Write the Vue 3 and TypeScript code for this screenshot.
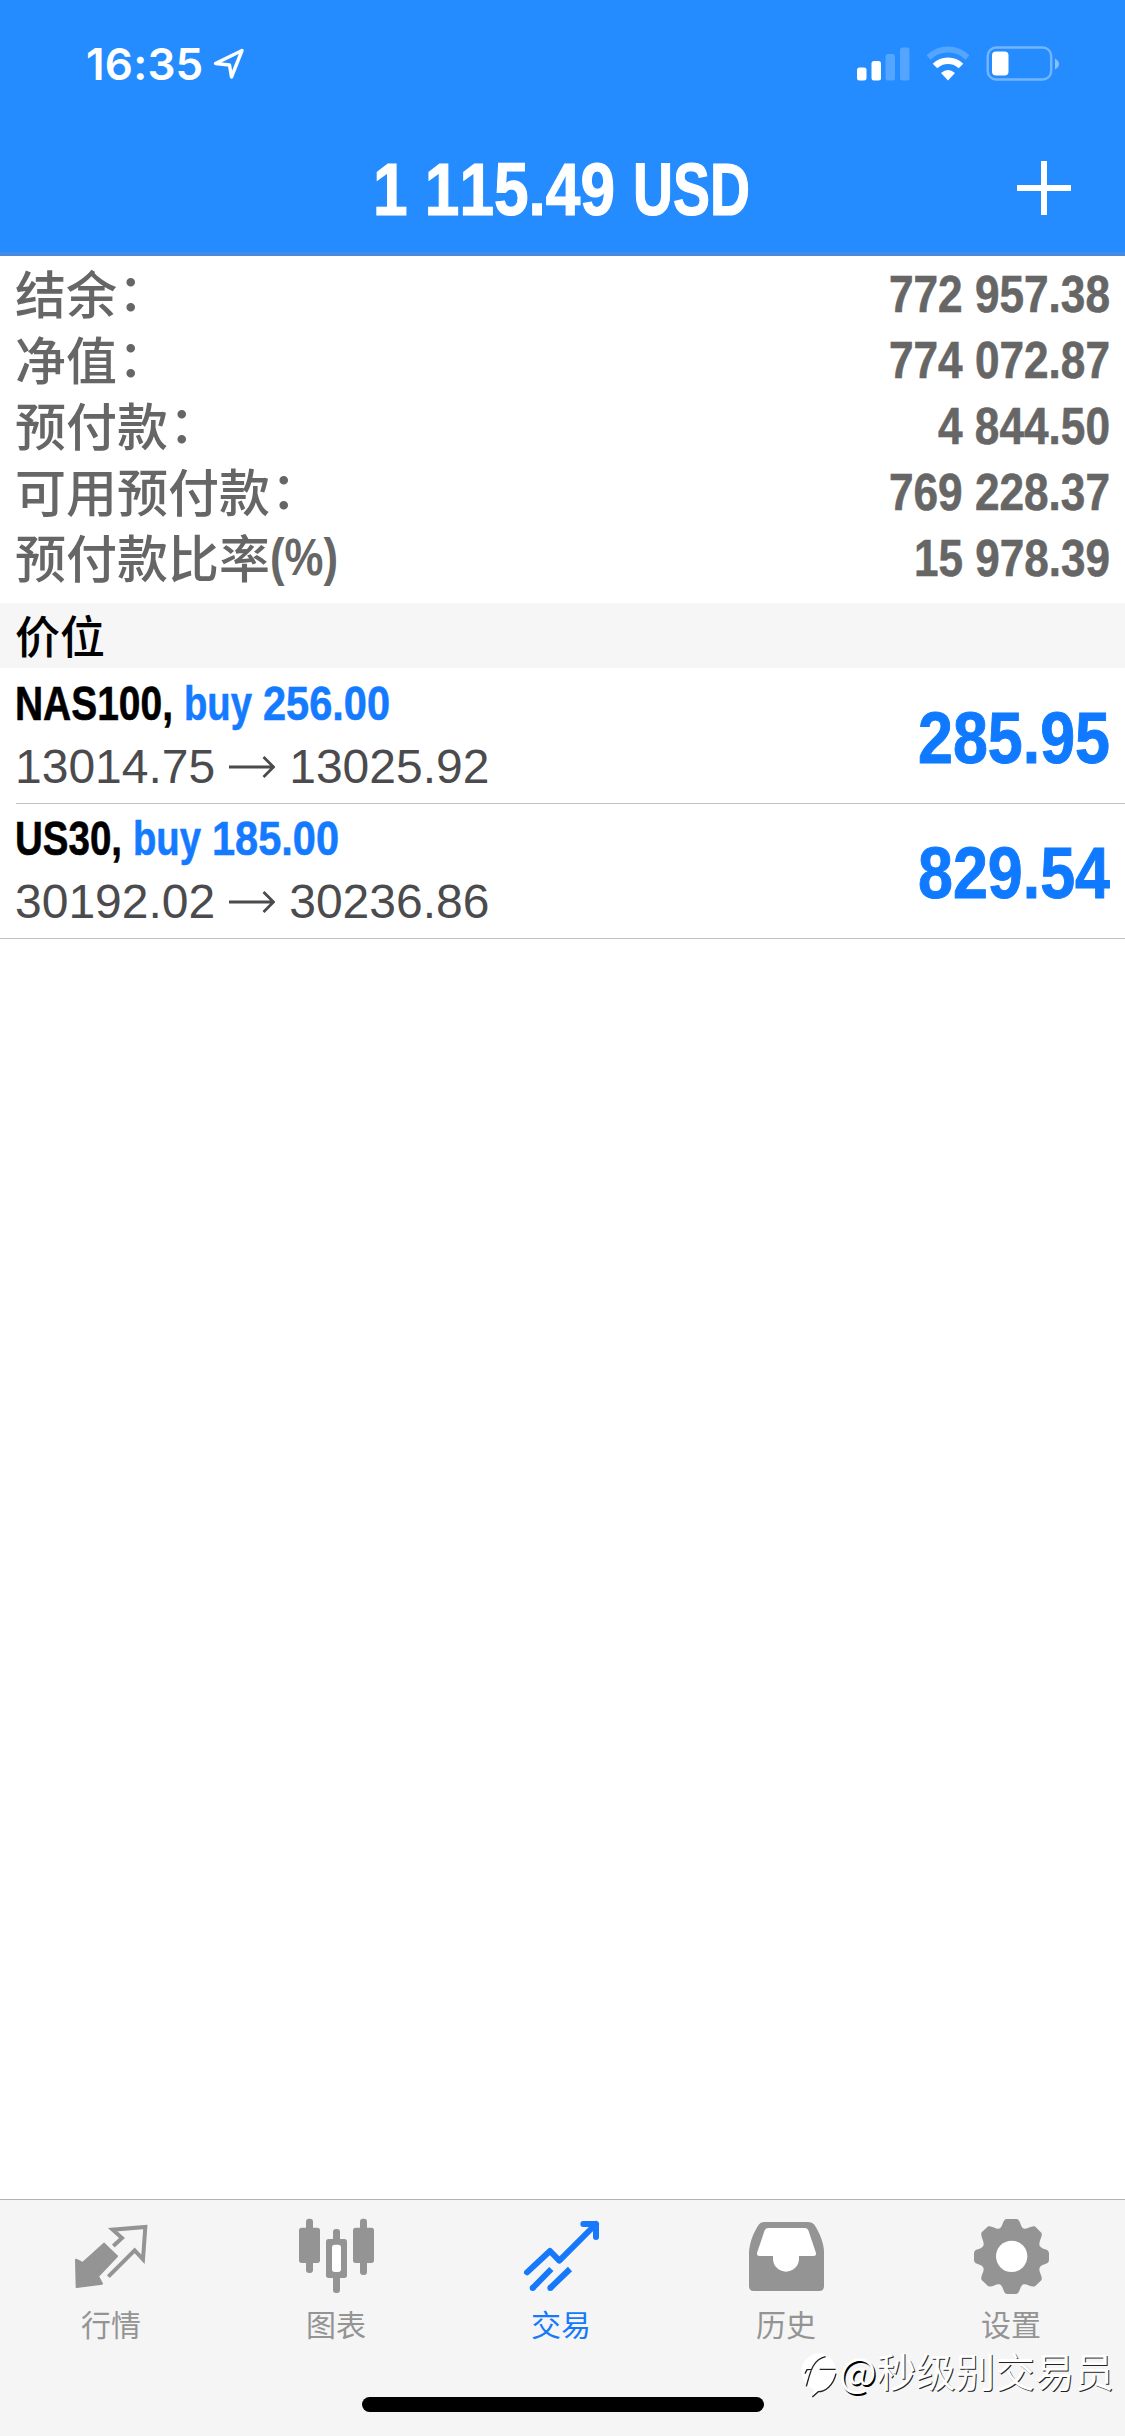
<script setup lang="ts">
import { defineComponent, h } from 'vue'

// Advance widths of the bold face, in em; anything else is a digit's width.
const ADVANCE: Record<string, number> = {
  ' ': 0.278, '.': 0.278, ',': 0.278, '(': 0.333, ')': 0.333, '%': 0.889,
  N: 0.722, A: 0.722, S: 0.667, U: 0.722, D: 0.722, b: 0.611, u: 0.611,
}

// A run of text condensed to an exact advance width.
const Fit = defineComponent({
  props: {
    text: { type: String, required: true },
    size: { type: Number, required: true },
    width: { type: Number, required: true },
    heavy: { type: Number, default: 0 },
  },
  setup(props) {
    return () => {
      const natural = [...props.text].reduce((sum, c) => sum + (ADVANCE[c] ?? 0.556), 0) * props.size
      return h(
        'svg',
        {
          width: props.width,
          height: props.size * 1.15,
          style: { display: 'block', overflow: 'visible', flex: 'none' },
        },
        [
          h(
            'text',
            {
              x: 0,
              y: props.size * 0.925,
              'font-size': props.size,
              transform: `scale(${(props.width / natural).toFixed(4)} 1)`,
              fill: 'currentColor',
              stroke: 'currentColor',
              'stroke-width': props.heavy,
              style: { whiteSpace: 'pre', fontKerning: 'none' },
            },
            props.text,
          ),
        ],
      )
    }
  },
})

interface Summary { label: string; mark: string; value: string; width: number }
interface Position {
  symbol: string; symbolWidth: number
  side: string; volume: string
  open: string; current: string; profit: string
}
interface Tab { id: string; label: string; box: string }

const summary: Summary[] = [
  { label: '结余', mark: '：', value: '772 957.38', width: 221 },
  { label: '净值', mark: '：', value: '774 072.87', width: 221 },
  { label: '预付款', mark: '：', value: '4 844.50', width: 172 },
  { label: '可用预付款', mark: '：', value: '769 228.37', width: 221 },
  { label: '预付款比率', mark: '(%)', value: '15 978.39', width: 196 },
]

const positions: Position[] = [
  { symbol: 'NAS100,', symbolWidth: 158, side: 'buy', volume: '256.00', open: '13014.75', current: '13025.92', profit: '285.95' },
  { symbol: 'US30,', symbolWidth: 107, side: 'buy', volume: '185.00', open: '30192.02', current: '30236.86', profit: '829.54' },
]

const tabs: Tab[] = [
  { id: 'quotes', label: '行情', box: '0 60 675 300' },
  { id: 'charts', label: '图表', box: '675 60 675 300' },
  { id: 'trade', label: '交易', box: '150 60 675 300' },
  { id: 'history', label: '历史', box: '-150 60 675 300' },
  { id: 'settings', label: '设置', box: '525 60 675 300' },
]
const active = 'trade'
</script>

<template>
  <div class="screen">
    <header class="top">
      <div class="status">
        <div class="clock">
          <span class="time">16:35</span>
          <svg class="loc" width="34" height="34" viewBox="0 0 34 34">
            <path d="M3.5 16.5 30 3.500 19.500 30 17.500 18Z" fill="none" stroke="#fff" stroke-width="3.4" stroke-linejoin="round" />
          </svg>
        </div>
        <svg class="radio" width="204" height="36" viewBox="857 46 204 36">
          <g fill="#fff">
            <rect x="857" y="67.500" width="9.500" height="13" rx="2.500" />
            <rect x="871.500" y="61" width="9.500" height="19.500" rx="2.500" />
            <g opacity=".22">
              <rect x="885.500" y="54" width="9.500" height="26.500" rx="2.500" />
              <rect x="900" y="47.500" width="9.500" height="33" rx="2.500" />
            </g>
          </g>
          <g fill="none" stroke="#fff">
            <path d="M928.500 57.500 A28 28 0 0 1 967.500 57.500" stroke-width="6" opacity=".22" />
            <path d="M935 66 A18.500 18.500 0 0 1 961 66" stroke-width="6.500" />
          </g>
          <path d="M941 73 Q948 67 955 73 L948 80.500Z" fill="#fff" />
          <rect x="987.700" y="47.500" width="63.500" height="32" rx="8.500" fill="none" stroke="#fff" stroke-opacity=".36" stroke-width="2.400" />
          <rect x="992" y="51.500" width="16.500" height="24" rx="4" fill="#fff" />
          <path d="M1055 58.500 Q1059 61 1059 64 Q1059 67 1055 69.500Z" fill="#fff" opacity=".45" />
        </svg>
      </div>
      <div class="nav">
        <div class="title">
          <Fit text="1 115.49" :size="74" :width="242" :heavy="1.2" />
          <Fit text="USD" :size="74" :width="117" :heavy="1.2" />
        </div>
        <svg class="plus" width="54" height="54" viewBox="0 0 54 54">
          <path d="M27 0V54M0 27H54" stroke="#fff" stroke-width="6" />
        </svg>
      </div>
    </header>

    <section class="summary">
      <div v-for="s in summary" :key="s.label" class="line">
        <div class="label">
          <span>{{ s.label }}</span>
          <span v-if="s.mark === '：'" class="colon">{{ s.mark }}</span>
          <Fit v-else class="percent" :text="s.mark" :size="51" :width="68" />
        </div>
        <Fit :text="s.value" :size="51" :width="s.width" :heavy="0.6" />
      </div>
    </section>

    <h2 class="section">价位</h2>

    <section class="positions">
      <article v-for="p in positions" :key="p.symbol" class="position">
        <div class="info">
          <div class="deal">
            <Fit class="symbol" :text="p.symbol" :size="48" :width="p.symbolWidth" :heavy="0.6" />
            <Fit :text="p.side" :size="48" :width="68" :heavy="0.6" />
            <Fit :text="p.volume" :size="48" :width="127" :heavy="0.6" />
          </div>
          <div class="prices">
            <span>{{ p.open }}</span>
            <svg width="46" height="24" viewBox="0 0 46 24">
              <path d="M0 12H44M34.500 2 44.500 12 34.500 22" fill="none" stroke="#4b4b4e" stroke-width="2.800" />
            </svg>
            <span>{{ p.current }}</span>
          </div>
        </div>
        <Fit class="profit" :text="p.profit" :size="73" :width="192" :heavy="1" />
      </article>
    </section>

    <main class="blank"></main>

    <footer class="dock">
      <nav class="tabs">
        <div v-for="t in tabs" :key="t.id" class="tab" :class="{ on: t.id === active }">
          <svg width="225" height="100" :viewBox="t.box" fill="currentColor" stroke="currentColor" stroke-width="0">
            <template v-if="t.id === 'quotes'">
              <path d="M312 191 351 229 294 289 306 311 230 321 228 239 248 249Z" stroke-width="6" stroke-linejoin="round" />
              <path d="M340 198 366 174 338 149 436 141 429 238 404 211 325 290" fill="none" stroke-width="12" />
            </template>
            <template v-else-if="t.id === 'charts'">
              <rect x="897" y="143" width="63" height="106" rx="8" />
              <rect x="918" y="116" width="21" height="163" rx="9" />
              <rect x="1059" y="143" width="63" height="106" rx="8" />
              <rect x="1080" y="116" width="21" height="169" rx="9" />
              <rect x="999" y="147" width="21" height="192" rx="9" />
              <rect x="978" y="177" width="63" height="117" rx="8" />
              <rect x="996" y="194" width="27" height="82" rx="8" fill="#fff" />
            </template>
            <template v-else-if="t.id === 'trade'">
              <g fill="none" stroke-width="18" stroke-linejoin="round">
                <path d="M381 277 450 213 478 242 588 132M550 132H588V171" stroke-linecap="round" />
                <path d="M398 324 454 267M451 324 510 267" />
              </g>
              <path d="M564 132H588V156Z" />
              <circle cx="398" cy="324" r="9" /><circle cx="451" cy="324" r="9" />
            </template>
            <template v-else-if="t.id === 'history'">
              <path d="M72 215C75 182 87 155 101 134Q106 126 118 126H250Q262 126 268 134C284 158 297 190 297 215V319Q297 333 283 333H86Q72 333 72 319Z" />
              <path d="M130 144H239Q247 144 250 151L272 216Q276 228 266 228H222V236A39 39 0 0 1 144 236V228H103Q93 228 97 216L119 151Q122 144 130 144Z" fill="#fff" />
            </template>
            <template v-else>
              <path d="M845 117H874C886 117 886 139 894 145C902 151 922 134 931 140L949 158C955 168 939 184 944 197C950 210 972 204 972 220V240C972 255 950 250 944 263C939 277 955 289 949 301L931 318C920 325 904 308 893 314C884 320 885 342 872 342H847C834 342 836 320 826 314C815 308 800 325 789 318L770 300C764 289 780 275 775 263C769 250 747 255 747 240V220C747 204 769 210 775 197C780 184 764 168 770 157L788 140C799 134 815 151 825 145C834 139 833 117 845 117Z" />
              <circle cx="860" cy="229" r="47" fill="#fff" />
            </template>
          </svg>
          <span>{{ t.label }}</span>
        </div>
      </nav>
      <div class="home"></div>
    </footer>

    <div class="mark">
      <svg width="40" height="46" viewBox="222 522 120 138">
        <path d="M279 523A54 54 0 0 1 333 577C333 615 305 636 280 638L262 654 268 632A56 56 0 0 1 279 523Z" fill="#fff" />
        <path d="M240 584 246 572 262 571M244 622C256 580 262 542 302 533M284 571H332M333 584C325 620 300 638 280 638L262 654" fill="none" stroke="#222" stroke-width="4" />
      </svg>
      <span class="at">@</span><span>秒级别交易员</span>
    </div>
  </div>
</template>

<style>
body { background: #fff; }
</style>

<style scoped>
.screen {
  position: relative;
  display: flex;
  flex-direction: column;
  width: 1125px;
  height: 2436px;
  overflow: hidden;
  background: #fff;
  font-family: "Liberation Sans", "Noto Sans CJK SC", sans-serif;
  font-weight: 700;
}
.top {
  box-sizing: border-box;
  height: 256px;
  flex: none;
  background: #248cff;
  border-bottom: 4px solid #438be4;
  color: #fff;
}
.status {
  display: flex;
  justify-content: space-between;
  height: 130px;
  padding: 0 64px 0 86px;
}
.clock {
  display: flex;
  align-items: flex-start;
  gap: 9px;
  padding-top: 37px;
}
.time {
  width: 117px;
  font: 600 44px/54px Inter, sans-serif;
  letter-spacing: 0.2px;
  white-space: nowrap;
}
.loc { margin-top: 10px; }
.radio { margin-top: 46px; }
.nav {
  display: flex;
  align-items: flex-start;
  justify-content: space-between;
  padding: 0 54px 0 373px;
}
.title { display: flex; gap: 18px; margin-top: 16.5px; }
.plus { margin-top: 31px; }
.summary {
  box-sizing: border-box;
  height: 347px;
  flex: none;
  padding: 5px 15px 0;
  color: #666;
}
.line {
  display: flex;
  align-items: center;
  justify-content: space-between;
  height: 66px;
}
.label {
  display: flex;
  height: 66px;
  margin-top: -4px;
  font: 500 51px/66px "Noto Sans CJK SC", sans-serif;
}
.colon { margin: -3px 0 0 1px; }
.percent {
  margin-top: 5px;
  font-family: "Liberation Sans", sans-serif;
  font-weight: 700;
}
.section {
  height: 65px;
  flex: none;
  margin: 0;
  padding-left: 15px;
  background: #f6f6f6;
  color: #000;
  font: 500 45px/63px "Noto Sans CJK SC", sans-serif;
}
.positions { flex: none; border-bottom: 1px solid #c0c0c0; }
.position {
  display: flex;
  justify-content: space-between;
  height: 135px;
  padding-right: 15px;
}
.position + .position::before {
  content: "";
  position: absolute;
  left: 16px;
  right: 0;
  height: 1px;
  background: #c0c0c0;
}
.info { padding: 8px 0 0 15px; }
.deal { display: flex; gap: 11px; color: #147aff; }
.symbol { color: #000; }
.prices {
  display: flex;
  align-items: center;
  gap: 14px;
  margin-top: 7.8px;
  color: #4b4b4e;
  font-size: 48px;
  font-weight: 400;
  line-height: 56px;
}
.profit { margin-top: 27px; color: #0f7aff; }
.blank { flex: 1; }
.dock {
  box-sizing: border-box;
  height: 237px;
  flex: none;
  border-top: 1px solid #b2b2b2;
  background: #f5f5f5;
}
.tabs { display: flex; height: 197px; }
.tab {
  display: flex;
  flex-direction: column;
  align-items: center;
  width: 225px;
  color: #949494;
  font: 400 30px/46px "Noto Sans CJK SC", sans-serif;
}
.tab span { margin-right: 3px; }
.tab.on { color: #1679fb; }
.home {
  width: 402px;
  height: 15px;
  margin: 0 auto;
  border-radius: 8px;
  background: #000;
}
.mark {
  position: absolute;
  left: 799px;
  top: 2353px;
  display: flex;
  color: #fff;
  font: 400 39.600px/46px "Noto Sans CJK SC", sans-serif;
  text-shadow: 1px 1px 0 #222;
}
.mark span { margin-top: -6px; }
.mark .at { text-shadow: 1.500px 1.500px 0 #000; }
</style>
